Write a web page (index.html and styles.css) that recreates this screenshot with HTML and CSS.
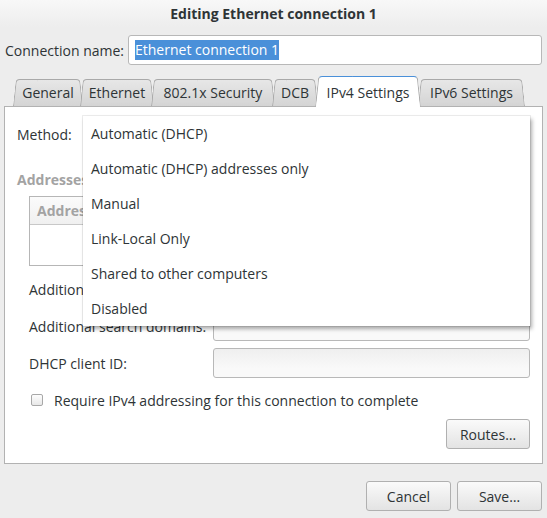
FILE: index.html
```html
<!DOCTYPE html>
<html>
<head>
<meta charset="utf-8">
<title>Editing Ethernet connection 1</title>
<link rel="stylesheet" href="styles.css">
</head>
<body>
<div class="titlebar">Editing Ethernet connection 1</div>
<div class="name-row">
  <span class="name-label">Connection name:</span>
  <div class="name-entry"><span class="sel">Ethernet connection 1</span></div>
</div>
<div class="tabs">
  <div class="tab t-general">General</div>
  <div class="tab t-ethernet">Ethernet</div>
  <div class="tab t-security">802.1x Security</div>
  <div class="tab t-dcb">DCB</div>
  <div class="tab active t-ipv4">IPv4 Settings</div>
  <div class="tab t-ipv6">IPv6 Settings</div>
</div>
<div class="frame">
  <div class="method-row"><span>Method:</span></div>
  <div class="section-title">Addresses</div>
  <div class="table">
    <div class="thead">Address</div>
    <div class="tbody"></div>
  </div>
  <div class="field f-dns"><span class="flabel">Additional DNS servers:</span><div class="entry"></div></div>
  <div class="field f-search"><span class="flabel">Additional search domains:</span><div class="entry"></div></div>
  <div class="field f-dhcp"><span class="flabel">DHCP client ID:</span><div class="entry"></div></div>
  <div class="check-row"><span class="checkbox"></span><span>Require IPv4 addressing for this connection to complete</span></div>
  <div class="routes-row"><button class="btn routes">Routes…</button></div>
</div>
<div class="actions">
  <button class="btn">Cancel</button>
  <button class="btn">Save…</button>
</div>
<div class="popup">
  <div class="item">Automatic (DHCP)</div>
  <div class="item">Automatic (DHCP) addresses only</div>
  <div class="item">Manual</div>
  <div class="item">Link-Local Only</div>
  <div class="item">Shared to other computers</div>
  <div class="item">Disabled</div>
</div>
</body>
</html>
```
FILE: styles.css
```css
html, body {
  margin: 0;
  padding: 0;
}
body {
  width: 547px;
  height: 518px;
  overflow: hidden;
  position: relative;
  background: #ededed;
  font-family: "Open Sans", "Noto Sans", "DejaVu Sans", sans-serif;
  font-size: 14px;
  color: #2e3436;
}
.titlebar {
  height: 27px;
  line-height: 27px;
  text-align: center;
  font-weight: bold;
  background: linear-gradient(#f8f8f8, #ededed);
}
.name-row {
  display: flex;
  align-items: center;
  height: 30px;
  margin-top: 8px;
  padding-left: 5px;
  padding-right: 5px;
}
.name-label {
  width: 123px;
  flex: none;
}
.name-entry {
  flex: 1;
  height: 30px;
  box-sizing: border-box;
  border: 1px solid #b8b8b8;
  border-radius: 3px;
  background: #fff;
  padding-left: 6px;
  display: flex;
  align-items: center;
}
.sel {
  background: #4a90d9;
  color: #fff;
  line-height: 20px;
}
.tabs {
  display: flex;
  align-items: flex-start;
  height: 31px;
  margin-top: 11px;
  margin-bottom: -1px;
  padding-left: 13px;
  position: relative;
  z-index: 1;
}
.tab {
  position: relative;
  z-index: 1;
  flex: none;
  box-sizing: border-box;
  height: 27px;
  margin-top: 3px;
  margin-right: -3px;
  line-height: 27px;
  text-align: center;
}
.tab::before,
.tab::after {
  content: "";
  position: absolute;
  top: 0;
  bottom: 0;
  z-index: -1;
  width: 60%;
  background: linear-gradient(#e7e7e7, #d4d4d4);
  border: 1px solid #a9a9a9;
  border-bottom: none;
  transform-origin: bottom;
}
.tab::before {
  left: 0;
  border-right: none;
  border-top-left-radius: 4px;
  transform: skewX(-6deg);
}
.tab::after {
  right: 0;
  border-left: none;
  border-top-right-radius: 4px;
  transform: skewX(6deg);
}
.tab.active {
  z-index: 2;
  height: 31px;
  margin-top: 0;
  padding-top: 3px;
  line-height: 28px;
}
.tab.active::before,
.tab.active::after {
  background: #fff;
  border-top-color: #4a90d9;
}
.t-general { width: 70px; }
.t-ethernet { width: 74px; }
.t-security { width: 124px; }
.t-dcb { width: 46px; }
.t-ipv4 { width: 106px; }
.t-ipv6 { width: 107px; }

.frame {
  margin: 0 4px;
  border: 1px solid #b2b2b2;
  background: #fff;
  padding: 0 12px 14px 12px;
}
.method-row {
  margin-top: 11px;
  height: 32px;
  display: flex;
  align-items: center;
}
.section-title {
  margin-top: 22px;
  line-height: 16px;
  font-weight: bold;
  color: #a3a3a3;
}
.table {
  margin: 8px 0 0 12px;
  border: 1px solid #b6b6b6;
}
.thead {
  height: 27px;
  line-height: 27px;
  padding-left: 7px;
  font-weight: bold;
  color: #a3a3a3;
  background: linear-gradient(#fbfbfb, #f0f0f0);
  border-bottom: 1px solid #c8c8c8;
}
.tbody {
  height: 40px;
}
.field {
  display: flex;
  align-items: center;
  height: 30px;
  margin-left: 12px;
}
.f-dns { margin-top: 8px; }
.f-search { margin-top: 7px; }
.f-dhcp { margin-top: 7px; }
.flabel {
  width: 184px;
  flex: none;
  white-space: nowrap;
}
.entry {
  flex: 1;
  height: 30px;
  box-sizing: border-box;
  border: 1px solid #b8b8b8;
  border-radius: 3px;
  background: linear-gradient(#efefef, #f9f9f9 70%);
}
.check-row {
  display: flex;
  align-items: center;
  height: 20px;
  margin: 12px 0 0 14px;
}
.checkbox {
  width: 12px;
  height: 12px;
  box-sizing: border-box;
  border: 1px solid #a8a8a8;
  border-radius: 2px;
  background: linear-gradient(#fdfdfd, #e8e8e8);
  margin-right: 11px;
  flex: none;
}
.routes-row {
  margin-top: 9px;
  display: flex;
  justify-content: flex-end;
}
.btn {
  font: inherit;
  color: inherit;
  height: 30px;
  width: 85px;
  padding: 0;
  border: 1px solid #b0b0b0;
  border-radius: 3px;
  background: linear-gradient(#fafafa, #e3e3e3);
}
.btn.routes {
  width: 84px;
}
.actions {
  display: flex;
  justify-content: flex-end;
  gap: 6px;
  margin-top: 17px;
  padding-right: 5px;
}
.popup {
  position: absolute;
  left: 83px;
  top: 116px;
  width: 447px;
  height: 210px;
  background: #fff;
  box-shadow: 0 0 0 1px rgba(0, 0, 0, 0.07), 2px 3px 4px rgba(0, 0, 0, 0.32);
  z-index: 5;
}
.item {
  height: 35px;
  line-height: 35px;
  padding-left: 8px;
  white-space: nowrap;
}
```
